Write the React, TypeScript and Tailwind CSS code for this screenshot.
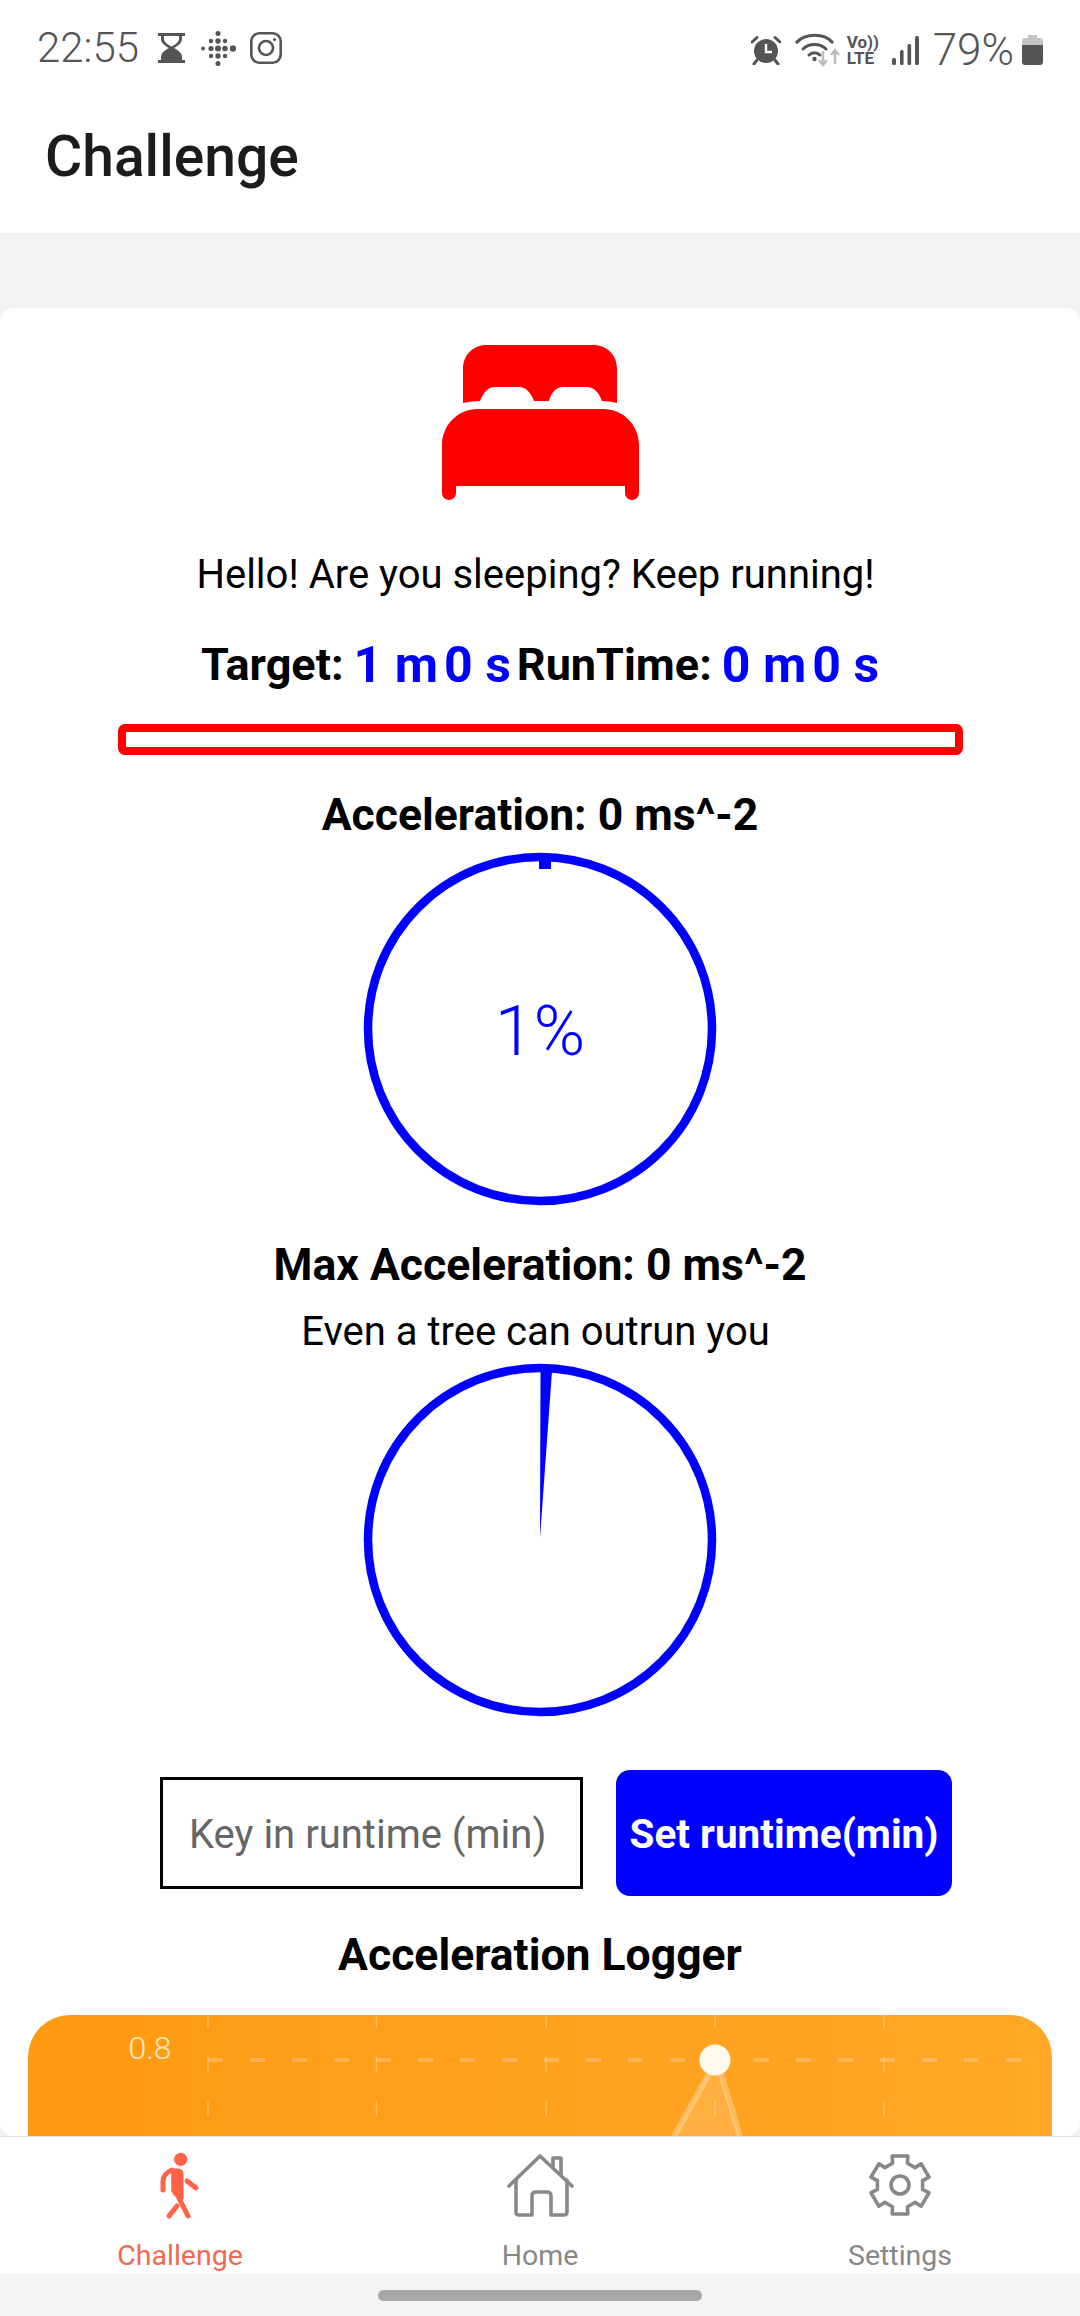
const gearPath = () => {
  const cx = 50;
  const cy = 54;
  const pts: string[] = [];
  for (let i = 0; i < 6; i++) {
    const a = -90 + i * 60;
    const p = (deg: number, r: number) => {
      const t = ((a + deg) * Math.PI) / 180;
      return `${(cx + r * Math.cos(t)).toFixed(1)} ${(cy + r * Math.sin(t)).toFixed(1)}`;
    };
    pts.push(`${i === 0 ? "M" : "L"}${p(-19, 23)}`, `L${p(-15, 30)}`, `L${p(15, 30)}`, `L${p(19, 23)}`);
  }
  return pts.join(" ") + " Z";
};

function BedIcon() {
  return (
    <svg viewBox="0 0 197 155" className="h-[155px] w-[197px] shrink-0" fill="#ff0000">
      <path d="M21 24C21 10 31 0 45 0H151C165 0 175 10 175 24V58Q168 56 160 56C157 48 152 42 145 42H121C114 42 109 48 107 56H92C89 48 84 42 77 42H53C46 42 41 48 38 56Q30 56 21 58Z" />
      <path d="M0 100C0 80 16 64 36 64H161C181 64 197 80 197 100V148A7 7 0 0 1 183 148V141H14V148A7 7 0 0 1 0 148Z" />
    </svg>
  );
}

function Gauge({ children }: { children?: React.ReactNode }) {
  return (
    <div className="relative h-[354px] w-[354px]">
      <svg viewBox="0 0 354 354" className="h-full w-full">
        <circle cx="177" cy="177" r="172" fill="none" stroke="#0000ff" strokeWidth="8.5" />
        {children}
      </svg>
    </div>
  );
}

function WalkIcon() {
  return (
    <svg viewBox="10 7 100 84" className="h-[84px] w-[100px]" fill="none" stroke="#ff6347" strokeLinecap="round" strokeLinejoin="round">
      <circle cx="60.7" cy="29.3" r="6.6" fill="#ff6347" stroke="none" />
      <path d="M52 39H58Q63 39 63 44V69L60 72L52 62Z" fill="#ff6347" stroke="#ff6347" strokeWidth="1" />
      <path d="M43 60V51Q43 44 52 40" strokeWidth="5" />
      <path d="M67 51L76 58" strokeWidth="5" />
      <path d="M59 68L68 86" strokeWidth="5" />
      <path d="M49 86L57 76" strokeWidth="5" />
    </svg>
  );
}

function HomeIcon() {
  return (
    <svg viewBox="10 7 100 84" className="h-[84px] w-[100px]" fill="none" stroke="#888888" strokeWidth="3.6" strokeLinecap="round" strokeLinejoin="round">
      <path d="M29 56L60 26L92 56" />
      <path d="M36 50V82Q36 85 39 85H52V66Q52 62 56 62H67Q71 62 71 66V85H84Q87 85 87 82V50" />
      <path d="M73 37V28H81V45" />
    </svg>
  );
}

function GearIcon() {
  return (
    <svg viewBox="0 6 100 84" className="h-[84px] w-[100px]" fill="none" stroke="#888888" strokeWidth="3.6" strokeLinejoin="round">
      <path d={gearPath()} />
      <circle cx="50" cy="54" r="9" />
    </svg>
  );
}

function StatusLeftIcons() {
  return (
    <div className="flex items-center">
      <svg viewBox="0 0 27 30" className="ml-[19px] h-[30px] w-[27px]" fill="#555555">
        <path d="M0 0H27V3H24V6C24 10 20 13 16 15C20 17 24 20 24 24V27H27V30H0V27H3V24C3 20 7 17 11 15C7 13 3 10 3 6V3H0ZM6 3V6C6 9 10 12 13.5 13.5C17 12 21 9 21 6V3Z" />
        <path d="M5 27C6 22 10 20 13.5 19C17 20 21 22 22 27Z" />
      </svg>
      <svg viewBox="0 0 35 35" className="ml-[16px] h-[35px] w-[35px]" fill="#555555">
        <circle cx="17" cy="2.5" r="2.5" />
        <circle cx="10" cy="10" r="2.2" />
        <circle cx="17" cy="10" r="2.7" />
        <circle cx="24" cy="10" r="2.2" />
        <circle cx="2" cy="17.5" r="2" />
        <circle cx="10" cy="17.5" r="2.6" />
        <circle cx="17" cy="17.5" r="3" />
        <circle cx="24" cy="17.5" r="2.8" />
        <circle cx="32" cy="17.5" r="3.2" />
        <circle cx="10" cy="25" r="2.2" />
        <circle cx="17" cy="25" r="2.7" />
        <circle cx="24" cy="25" r="2.2" />
        <circle cx="17" cy="32.5" r="2.5" />
      </svg>
      <svg viewBox="0 0 32 32" className="ml-[14px] h-[32px] w-[32px]" fill="none" stroke="#555555" strokeWidth="2.6">
        <rect x="1.3" y="1.3" width="29.4" height="29.4" rx="8" />
        <circle cx="16" cy="16" r="7" />
        <circle cx="24.5" cy="7.5" r="1.6" fill="#555555" stroke="none" />
      </svg>
    </div>
  );
}

function StatusRightIcons() {
  return (
    <div className="flex items-center">
      <svg viewBox="0 0 30 30" className="h-[30px] w-[30px]" fill="#555555">
        <circle cx="15" cy="16" r="12" />
        <path d="M1 7L6 2.5M29 7L24 2.5M6 25L3 29M24 25L27 29" stroke="#555555" strokeWidth="3" strokeLinecap="round" />
        <path d="M15 9V17H21" fill="none" stroke="#ffffff" strokeWidth="2.4" />
      </svg>
      <svg viewBox="0 0 46 34" className="ml-[14px] h-[34px] w-[46px]" fill="none">
        <path d="M2 9C11 0 29 0 37 9" stroke="#555555" strokeWidth="3.2" strokeLinecap="round" />
        <path d="M8 16C14 10 25 10 31 16" stroke="#555555" strokeWidth="3" strokeLinecap="round" />
        <path d="M14 22C17 19 22 19 25 22" stroke="#555555" strokeWidth="3" strokeLinecap="round" />
        <circle cx="19.5" cy="26" r="2.2" fill="#555555" />
        <path d="M28 18V32M24 27L28 32L32 27" stroke="#bdbdbd" strokeWidth="2.6" />
        <path d="M40 31V17M36 22L40 17L44 22" stroke="#bdbdbd" strokeWidth="2.6" />
      </svg>
      <div className="ml-[6px] flex w-[34px] flex-col items-start text-[17px] leading-[16px] font-bold text-[#555555]">
        <span>Vo))</span>
        <span>LTE</span>
      </div>
      <svg viewBox="0 0 27 29" className="ml-[11px] h-[29px] w-[27px]" fill="#555555">
        <rect x="0" y="22" width="4" height="7" rx="1.5" />
        <rect x="8" y="14" width="3.6" height="15" rx="1.5" />
        <rect x="15.5" y="8" width="3.6" height="21" rx="1.5" />
        <rect x="23" y="0" width="4" height="29" rx="1.5" />
      </svg>
      <span className="ml-[14px] text-[44px] leading-none font-light text-[#555555]">79%</span>
      <svg viewBox="0 0 21 30" className="ml-[8px] h-[30px] w-[21px]">
        <path d="M6 0H15V3H18Q21 3 21 6V12H0V6Q0 3 3 3H6Z" fill="#c4c4c4" />
        <path d="M0 10H21V27Q21 30 18 30H3Q0 30 0 27Z" fill="#555555" />
      </svg>
    </div>
  );
}

function Chart() {
  return (
    <div className="mx-[28px] mt-[38px] h-[140px] overflow-hidden rounded-t-[42px] bg-linear-to-r from-[#ff9a10] to-[#ffa726]">
      <svg viewBox="28 2015 1025 121" className="h-[121px] w-[1025px]">
        <g stroke="#ffffff" strokeOpacity="0.28" strokeWidth="1.5" strokeDasharray="15 29" fill="none">
          <path d="M208 2013V2136" />
          <path d="M376.5 2013V2136" />
          <path d="M546 2013V2136" />
          <path d="M715 2013V2136" />
          <path d="M884 2013V2136" />
        </g>
        <path d="M208 2060H1025" stroke="#ffffff" strokeOpacity="0.22" strokeWidth="4" strokeDasharray="15 27" fill="none" />
        <path d="M672 2140L715 2060L741 2140Z" fill="#ffffff" fillOpacity="0.14" />
        <path d="M672 2140L711 2070M741 2140L720 2070" stroke="#ffffff" strokeOpacity="0.28" strokeWidth="6" fill="none" />
        <circle cx="715" cy="2060" r="15.5" fill="#fff8ec" />
        <text x="150" y="2059" textAnchor="middle" fontFamily="Roboto, sans-serif" fontSize="32" fontWeight="300" fill="#ffe9c4">0.8</text>
      </svg>
    </div>
  );
}

export default function App() {
  return (
    <div className="flex h-[2316px] w-[1080px] flex-col overflow-hidden bg-[#f2f2f2] font-['Roboto',sans-serif]">
      {/* status bar */}
      <div className="flex h-[68px] shrink-0 items-start justify-between bg-white pt-[28px] pr-[37px] pl-[37px]">
        <div className="flex items-center">
          <span className="text-[42px] leading-[40px] font-light text-[#555555]">22:55</span>
          <StatusLeftIcons />
        </div>
        <StatusRightIcons />
      </div>

      {/* header */}
      <div className="flex h-[165px] shrink-0 items-start bg-white pt-[62px] pl-[45px]">
        <span className="text-[57px] leading-[54px] font-medium text-[#1c1c1c]">Challenge</span>
      </div>

      {/* scroll content */}
      <div className="mt-[75px] min-h-0 flex-1 overflow-hidden rounded-[14px] bg-white pt-[37px]">
        <div className="flex flex-col items-center">
          <BedIcon />
          <p className="mt-[53px] pr-[9px] text-[40px] leading-[44px] text-black">Hello! Are you sleeping? Keep running!</p>
          <div className="mt-[43px] flex h-[50px] items-center font-bold">
            <span className="text-[45px] text-black">Target:</span>
            <span className="ml-[10px] text-[50px] text-[#0000ff]">1 m</span>
            <span className="ml-[6px] text-[50px] text-[#0000ff]">0 s</span>
            <span className="ml-[6px] text-[45px] text-black">RunTime:</span>
            <span className="ml-[10px] text-[50px] text-[#0000ff]">0 m</span>
            <span className="ml-[6px] text-[50px] text-[#0000ff]">0 s</span>
          </div>
          <div className="mt-[34px] h-[31px] w-[845px] rounded-[7px] border-[8px] border-[#ff0000] bg-white" />
          <p className="mt-[38px] text-[44.5px] leading-[44px] font-bold text-black">Acceleration: 0 ms^-2</p>
          <div className="relative mt-[15px]">
            <Gauge>
              <rect x="176" y="8" width="12" height="9" fill="#0000ff" />
            </Gauge>
            <div className="absolute inset-0 flex items-center justify-center pt-[3px] text-[70px] leading-none font-light text-[#0000ff]">1%</div>
          </div>
          <p className="mt-[37px] text-[44.5px] leading-[44px] font-bold text-black">Max Acceleration: 0 ms^-2</p>
          <p className="mt-[23px] pr-[9px] text-[40px] leading-[44px] text-black">Even a tree can outrun you</p>
          <div className="mt-[9px]">
            <Gauge>
              <path d="M177 175L177.5 8H189Z" fill="#0000ff" />
            </Gauge>
          </div>
          <div className="mt-[53px] ml-[32px] flex items-center gap-[33px]">
            <div className="flex h-[112px] w-[423px] items-center border-[3px] border-black pt-[3px] pl-[26px] text-[40px] text-[#666666]">Key in runtime (min)</div>
            <button type="button" className="flex h-[126px] w-[336px] items-center justify-center rounded-[14px] bg-[#0000ff] pt-[2px] text-[40.5px] font-bold whitespace-nowrap text-white">
              Set runtime(min)
            </button>
          </div>
          <p className="mt-[37px] text-[44.5px] leading-[44px] font-bold text-black">Acceleration Logger</p>
          <div className="w-full">
            <Chart />
          </div>
        </div>
      </div>

      {/* bottom tabs */}
      <div className="grid h-[138px] shrink-0 grid-cols-3 border-t border-[#e4e4e4] bg-white">
        <div className="flex flex-col items-center">
          <WalkIcon />
          <span className="mt-[18px] text-[28.5px] leading-[34px] text-[#ef6a50]">Challenge</span>
        </div>
        <div className="flex flex-col items-center">
          <HomeIcon />
          <span className="mt-[18px] text-[28.5px] leading-[34px] text-[#888888]">Home</span>
        </div>
        <div className="flex flex-col items-center">
          <GearIcon />
          <span className="mt-[18px] text-[28.5px] leading-[34px] text-[#888888]">Settings</span>
        </div>
      </div>

      {/* gesture bar */}
      <div className="flex h-[42px] shrink-0 items-start justify-center bg-[#f5f5f7] pt-[16px]">
        <div className="h-[11px] w-[324px] rounded-full bg-[#a8a8a8]" />
      </div>
    </div>
  );
}
